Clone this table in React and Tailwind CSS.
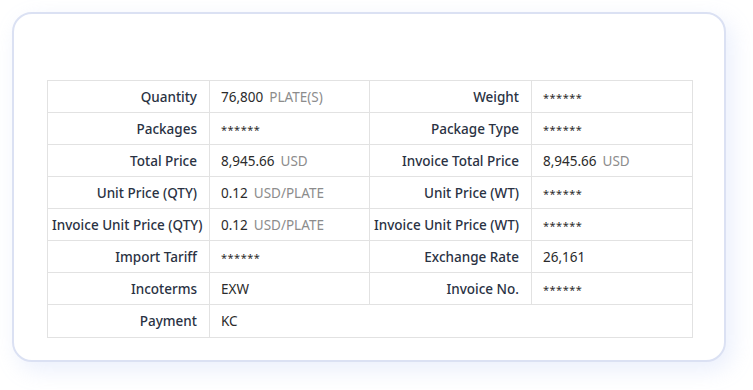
const rows = [
  [["Quantity", "76,800", "PLATE(S)"], ["Weight", "******"]],
  [["Packages", "******"], ["Package Type", "******"]],
  [["Total Price", "8,945.66", "USD"], ["Invoice Total Price", "8,945.66", "USD"]],
  [["Unit Price (QTY)", "0.12", "USD/PLATE"], ["Unit Price (WT)", "******"]],
  [["Invoice Unit Price (QTY)", "0.12", "USD/PLATE"], ["Invoice Unit Price (WT)", "******"]],
  [["Import Tariff", "******"], ["Exchange Rate", "26,161"]],
  [["Incoterms", "EXW"], ["Invoice No.", "******"]],
];

const Label = ({ children }) => (
  <td className="border border-[#e2e2e2] pr-[12px] pl-1 pt-[2px] text-right font-medium text-[#2a3243] whitespace-nowrap">
    {children}
  </td>
);

const Value = ({ value, unit, span }) => (
  <td colSpan={span} className="border border-[#e2e2e2] pl-[11px] pt-[2px] text-[#2b2b2b] whitespace-nowrap">
    {value === "******" ? (
      <span className="text-[11px] tracking-[0.5px]">******</span>
    ) : (
      value
    )}
    {unit && <span className="ml-[6px] text-[#8c8c8c]">{unit}</span>}
  </td>
);

export default function App() {
  return (
    <div className="w-[753px] h-[390px] bg-white p-[12px]" style={{ fontFamily: '"Noto Sans", "Open Sans", sans-serif' }}>
      <div className="h-[350px] w-[714px] rounded-[20px] border-2 border-[#dbe1f3] bg-white px-[33px] pt-[66px] shadow-[6px_8px_22px_rgba(160,180,240,0.22)]">
        <table className="w-[645px] table-fixed border-collapse text-[13.5px] leading-none">
          <colgroup>
            <col className="w-[162px]" />
            <col className="w-[160px]" />
            <col className="w-[162px]" />
            <col className="w-[161px]" />
          </colgroup>
          <tbody>
            {rows.map(([a, b], i) => (
              <tr key={i} className="h-[32px]">
                <Label>{a[0]}</Label>
                <Value value={a[1]} unit={a[2]} />
                <Label>{b[0]}</Label>
                <Value value={b[1]} unit={b[2]} />
              </tr>
            ))}
            <tr className="h-[33px]">
              <Label>Payment</Label>
              <Value value="KC" span={3} />
            </tr>
          </tbody>
        </table>
      </div>
    </div>
  );
}
